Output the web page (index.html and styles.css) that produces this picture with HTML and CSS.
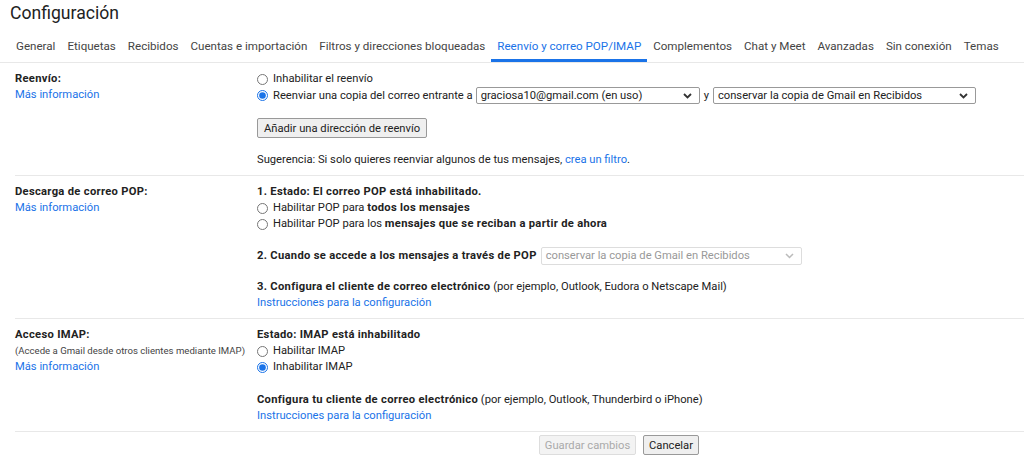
FILE: index.html
```html
<!DOCTYPE html>
<html lang="es">
	<head>
		<meta charset="utf-8">
		<title>Configuración</title>
		<link rel="stylesheet" href="styles.css">
	</head>
	<body>
		<h1>Configuración</h1>
		<div class=tabs>
			<span class=tab>General</span>
			<span class=tab>Etiquetas</span>
			<span class=tab>Recibidos</span>
			<span class=tab>Cuentas e importación</span>
			<span class=tab>Filtros y direcciones bloqueadas</span>
			<span class="tab active">Reenvío y correo POP/IMAP</span>
			<span class=tab>Complementos</span>
			<span class=tab>Chat y Meet</span>
			<span class=tab>Avanzadas</span>
			<span class=tab>Sin conexión</span>
			<span class=tab>Temas</span>
		</div>

		<!-- reenvio -->
		<div class=section>
			<div class=label>
				<div class=title>Reenvío:</div>
				<a href="#">Más información</a>
			</div>
			<div class=content>
				<label class=opt><input type=radio name=fwd>Inhabilitar el reenvío</label>
				<div class=opt>
					<input type=radio name=fwd checked>Reenviar una copia del correo entrante a
					<span class=select id=fwdAddress>graciosa10@gmail.com (en uso)
						<svg width="9" height="6" viewBox="0 0 9 6"><polyline points="1,1 4.5,4.5 8,1" fill="none" stroke="#333" stroke-width="1.8"/></svg>
					</span>
					<span class=conj>y</span>
					<span class=select id=fwdAction>conservar la copia de Gmail en Recibidos
						<svg width="9" height="6" viewBox="0 0 9 6"><polyline points="1,1 4.5,4.5 8,1" fill="none" stroke="#333" stroke-width="1.8"/></svg>
					</span>
				</div>
				<button type=button class=btn id=addButton>Añadir una dirección de reenvío</button>
				<p class=tip>Sugerencia: Si solo quieres reenviar algunos de tus mensajes, <a href="#">crea un filtro</a>.</p>
			</div>
		</div>

		<!-- pop -->
		<div class=section>
			<div class=label>
				<div class=title>Descarga de correo POP:</div>
				<a href="#">Más información</a>
			</div>
			<div class=content>
				<b>1. Estado: El correo POP está inhabilitado.</b>
				<label class=opt><input type=radio name=pop>Habilitar POP para&nbsp;<b>todos los mensajes</b></label>
				<label class=opt><input type=radio name=pop>Habilitar POP para los&nbsp;<b>mensajes que se reciban a partir de ahora</b></label>
				<div class="opt step">
					<b>2. Cuando se accede a los mensajes a través de POP</b>
					<span class="select disabled" id=popAction>conservar la copia de Gmail en Recibidos
						<svg width="9" height="6" viewBox="0 0 9 6"><polyline points="1,1 4.5,4.5 8,1" fill="none" stroke="#bbb" stroke-width="1.5"/></svg>
					</span>
				</div>
				<div class=step3><b>3. Configura el cliente de correo electrónico</b> (por ejemplo, Outlook, Eudora o Netscape Mail)</div>
				<a href="#">Instrucciones para la configuración</a>
			</div>
		</div>

		<!-- imap -->
		<div class=section>
			<div class=label>
				<div class=title>Acceso IMAP:</div>
				<div class=small>(Accede a Gmail desde otros clientes mediante IMAP)</div>
				<a href="#">Más información</a>
			</div>
			<div class=content>
				<b>Estado: IMAP está inhabilitado</b>
				<label class=opt><input type=radio name=imap>Habilitar IMAP</label>
				<label class=opt><input type=radio name=imap checked>Inhabilitar IMAP</label>
				<div class=client><b>Configura tu cliente de correo electrónico</b> (por ejemplo, Outlook, Thunderbird o iPhone)</div>
				<a href="#">Instrucciones para la configuración</a>
			</div>
		</div>

		<div class=footer>
			<button type=button class=btn id=saveButton disabled>Guardar cambios</button>
			<button type=button class=btn id=cancelButton>Cancelar</button>
		</div>
	</body>
</html>
```

FILE: styles.css
```css
* {
	margin:0;
	padding:0;
	box-sizing:border-box;
}
body {
	font-family:Roboto, "Liberation Sans", sans-serif;
	font-size:11.2px;
	line-height:16px;
	color:#222;
	background:#fff;
}
a {
	color:#1a73e8;
	text-decoration:none;
}
b {
	font-weight:bold;
	letter-spacing:0.3px;
}
h1 {
	font-size:17.6px;
	font-weight:normal;
	line-height:26px;
	padding-left:10px;
	height:30px;
	color:#222;
}
.tabs {
	display:flex;
	padding-left:10px;
	border-bottom:1px solid #e8e8e8;
}
.tab {
	font-size:11.6px;
	color:#444;
	padding:8px 6px 5px;
	line-height:16px;
	border-bottom:3px solid transparent;
	white-space:nowrap;
}
.tab.active {
	color:#1a73e8;
	border-bottom-color:#1a73e8;
}
.section {
	display:flex;
	margin-left:15px;
	padding:8px 0 7px;
	border-bottom:1px solid #e8e8e8;
}
.label {
	width:242px;
	flex:none;
}
.title {
	font-weight:bold;
	letter-spacing:0.3px;
}
.small {
	font-size:9.6px;
	color:#444;
	white-space:nowrap;
}
.content {
	display:flex;
	flex-direction:column;
	align-items:flex-start;
}
.opt {
	display:flex;
	align-items:center;
	white-space:nowrap;
}
input[type=radio] {
	width:11px;
	height:11px;
	margin:0 5px 0 0;
	accent-color:#1a73e8;
}
.select {
	display:inline-flex;
	align-items:center;
	justify-content:space-between;
	height:17px;
	padding:0 4px;
	border:1px solid #999;
	border-radius:2px;
	background:#fff;
	color:#222;
	letter-spacing:0;
	font-weight:normal;
}
.select svg {
	margin-right:3px;
}
#fwdAddress {
	width:224px;
	margin-left:3px;
}
#fwdAction {
	width:263px;
}
.conj {
	padding:0 4px;
}
.select.disabled {
	color:#999;
	border-color:#ddd;
	width:261px;
	margin-left:4px;
	height:18px;
}
.btn {
	font-family:Roboto, "Liberation Sans", sans-serif;
	font-size:11.2px;
	color:#222;
	height:20px;
	padding:0 6px;
	border:1px solid #999;
	border-radius:2px;
	background:#efefef;
	white-space:nowrap;
}
#addButton {
	margin-top:14px;
}
.tip {
	margin-top:14px;
}
.step {
	margin-top:15px;
}
.step3 {
	margin-top:14px;
}
.client {
	margin-top:17px;
}
.footer {
	display:flex;
	gap:7px;
	padding:3px 0 0 539px;
}
#saveButton {
	color:#aaa;
	border-color:#ddd;
	background:#f3f3f3;
	width:97px;
	padding:0;
}
#cancelButton {
	width:56px;
	padding:0;
}
```
